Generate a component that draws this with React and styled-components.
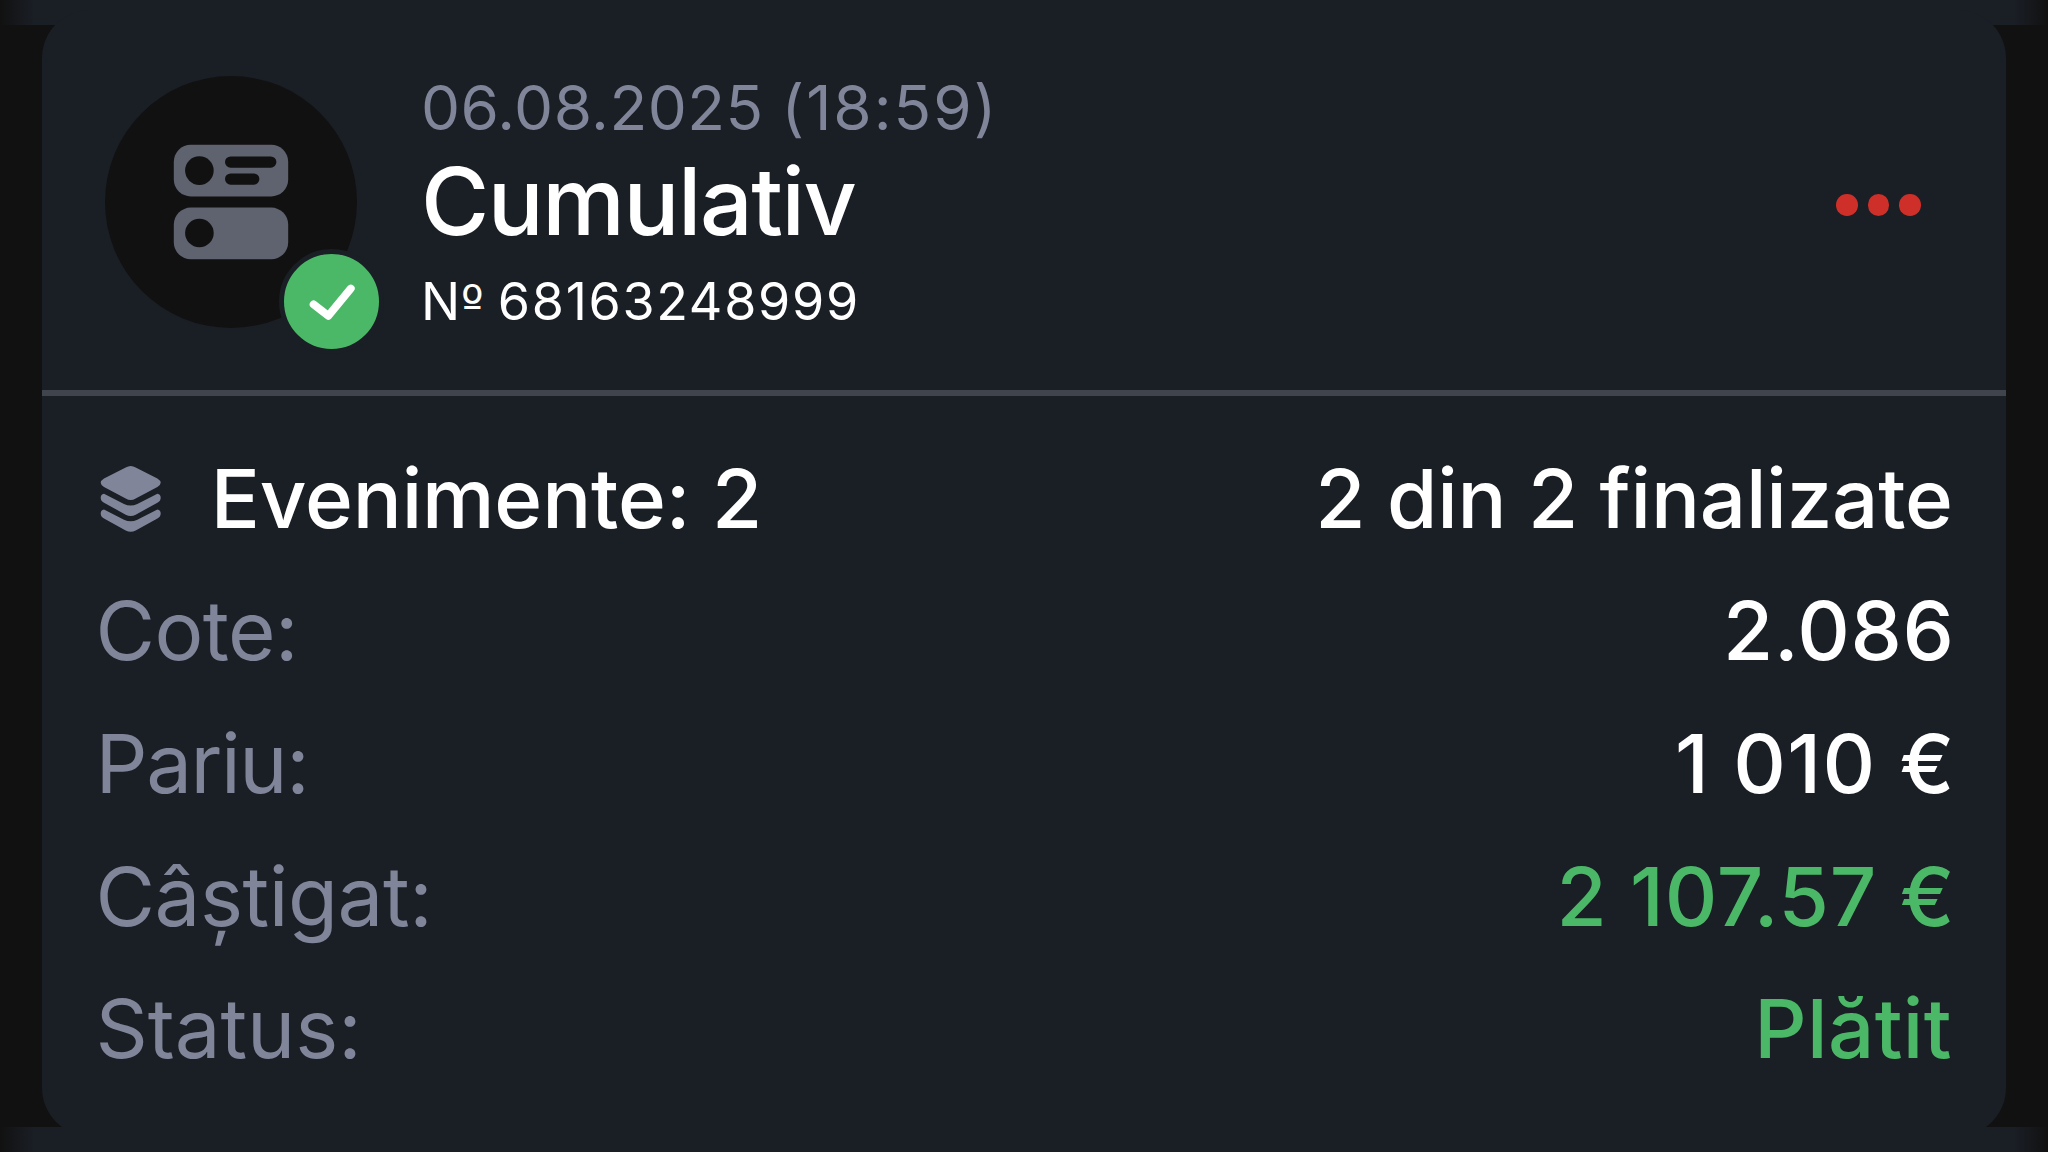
import React from 'react';
import styled, { createGlobalStyle } from 'styled-components';

const color = {
  page: '#111111',
  card: '#1a1e25',
  muted: '#808599',
  text: '#ffffff',
  green: '#4bb868',
  red: '#ce2f28',
  line: '#40444d',
  glyph: '#5f626f',
};

const GlobalStyle = createGlobalStyle`
  *, *::before, *::after { box-sizing: border-box; }
  body {
    margin: 0;
    background: ${color.page};
    font-family: Inter, 'Liberation Sans', sans-serif;
    overflow: hidden;
  }
`;

const Page = styled.div`
  display: flex;
  flex-direction: column;
  height: 1152px;
  background: ${color.page};
`;

const Strip = styled.div`
  flex: none;
  height: 25px;
  background: linear-gradient(
    90deg,
    ${color.page} 0,
    ${color.card} 34px,
    ${color.card} calc(100% - 34px),
    ${color.page} 100%
  );
`;

const Card = styled.article`
  flex: 1;
  display: flex;
  flex-direction: column;
  margin: -15px 42px -9px;
  border-radius: 48px;
  background: ${color.card};
`;

const Header = styled.header`
  display: flex;
  align-items: flex-start;
  height: 380px;
  padding: 62px 85.5px 0 63px;
`;

const Avatar = styled.div`
  position: relative;
  display: flex;
  align-items: center;
  justify-content: center;
  width: 252px;
  height: 252px;
  margin-top: 3.5px;
  border-radius: 50%;
  background: ${color.page};
`;

const StatusBadge = styled.div`
  position: absolute;
  right: -26.5px;
  bottom: -26px;
  display: flex;
  width: 105px;
  height: 105px;
  border: 5px solid ${color.card};
  border-radius: 50%;
  background: ${color.green};
`;

const TitleBlock = styled.div`
  flex: 1;
  display: flex;
  flex-direction: column;
  margin-left: 64px;
`;

const BetDate = styled.time`
  color: ${color.muted};
  font-size: 62px;
  line-height: 72px;
  letter-spacing: 0.45px;
`;

const BetHour = styled.span`
  letter-spacing: 2px;
`;

const BetType = styled.h1`
  margin: 9px 0 23px;
  color: ${color.text};
  font-size: 93px;
  font-weight: 500;
  line-height: 96px;
  letter-spacing: -1.44px;
`;

const BetNumber = styled.span`
  color: ${color.text};
  font-size: 52px;
  line-height: 60px;
  letter-spacing: 1.7px;
`;

const Ordinal = styled.span`
  margin: 0 -2px 0 -1px;
  font-family: 'DejaVu Sans', sans-serif;
  font-size: 48px;
  line-height: 1px;
  letter-spacing: 0;
`;

const MenuButton = styled.button`
  display: flex;
  gap: 10px;
  margin-top: 122px;
  padding: 0;
  border: 0;
  background: none;
`;

const Dot = styled.span`
  width: 21.5px;
  height: 21.5px;
  border-radius: 50%;
  background: ${color.red};
`;

const Divider = styled.hr`
  width: 100%;
  height: 5.5px;
  margin: 0;
  border: 0;
  background: ${color.line};
`;

const Details = styled.dl`
  display: flex;
  flex-direction: column;
  margin: 0;
  padding: 37.4px 53px 0 53.5px;
`;

const Row = styled.div`
  display: flex;
  align-items: center;
  justify-content: space-between;
  height: 132.6px;
  font-size: 81.6px;
  line-height: 132.6px;
  white-space: pre;
`;

const Label = styled.dt`
  color: ${(p) => (p.$strong ? color.text : color.muted)};
  font-weight: ${(p) => (p.$strong ? 500 : 400)};
  letter-spacing: ${(p) => p.$tracking}px;
`;

const Value = styled.dd`
  margin: 0 ${(p) => p.$trim}px 0 0;
  color: ${(p) => (p.$positive ? color.green : color.text)};
  font-weight: 500;
  letter-spacing: ${(p) => p.$tracking}px;
`;

const AccumulatorIcon = () => (
  <svg width="116" height="116" viewBox="0 0 116 116">
    <g fill={color.glyph}>
      <rect x="0.8" y="0.8" width="114.4" height="51.6" rx="17" />
      <rect x="0.8" y="63.6" width="114.4" height="51.6" rx="17" />
    </g>
    <g fill={color.page}>
      <circle cx="26.4" cy="26.6" r="14.3" />
      <rect x="52" y="12.4" width="51.4" height="11.3" rx="5.65" />
      <rect x="52" y="29.4" width="34.4" height="11.3" rx="5.65" />
      <circle cx="26.4" cy="89" r="14.3" />
    </g>
  </svg>
);

const CheckIcon = () => (
  <svg width="95" height="95" viewBox="0 0 95 95">
    <path
      d="M29.6 50.4 44.4 61.8 66.8 34.6"
      fill="none"
      stroke={color.text}
      strokeWidth="7.8"
      strokeLinecap="round"
      strokeLinejoin="round"
    />
  </svg>
);

const chevron =
  'M5 29.7 25 39.9Q31.7 42.9 38.3 39.9L58.4 29.7Q61.7 30.3 61.7 33.7 61.7 37 58.4 38.7L36.7 50.7Q31.7 53.3 26.7 50.7L5 38.7Q1.7 37 1.7 33.7 1.7 30.3 5 29.7Z';

const LayersIcon = () => (
  <svg width="64" height="70" viewBox="0 0 64 70" fill={color.muted}>
    <path d="M26.7 3.6Q31.7 0.4 36.7 3.6L58.4 14.5Q65 18.7 58.4 23L36.7 34.4Q31.7 37.8 26.7 34.4L5 23Q-1.6 18.7 5 14.5Z" />
    <path d={chevron} />
    <path d={chevron} transform="translate(0 15.8)" />
  </svg>
);

const Events = styled.span`
  display: flex;
  align-items: center;
  gap: 48px;
  margin-left: 3.2px;
`;

const rows = [
  { label: 'Cote:', labelTracking: -0.6, value: '2.086', tracking: 0.67, trim: -1.6 },
  { label: 'Pariu:', labelTracking: -1.46, value: '1 010 €', tracking: 1.35, trim: -2.8 },
  { label: 'Câștigat:', labelTracking: -0.48, value: '2 107.57 €', tracking: 0.8, trim: -2.3, positive: true },
  { label: 'Status:', labelTracking: -0.1, value: 'Plătit', tracking: 0.4, trim: 1, positive: true },
];

export default function App() {
  return (
    <>
      <GlobalStyle />
      <Page>
        <Strip />
        <Card>
          <Header>
            <Avatar>
              <AccumulatorIcon />
              <StatusBadge>
                <CheckIcon />
              </StatusBadge>
            </Avatar>
            <TitleBlock>
              <BetDate>
                06.08.2025 <BetHour>(18:59)</BetHour>
              </BetDate>
              <BetType>Cumulativ</BetType>
              <BetNumber>
                N<Ordinal>º</Ordinal> 68163248999
              </BetNumber>
            </TitleBlock>
            <MenuButton aria-label="Meniu">
              <Dot />
              <Dot />
              <Dot />
            </MenuButton>
          </Header>
          <Divider />
          <Details>
            <Row>
              <Label $strong $tracking={-0.15}>
                <Events>
                  <LayersIcon />
                  Evenimente: 2
                </Events>
              </Label>
              <Value $tracking={-0.2} $trim={0.3}>2 din 2 finalizate</Value>
            </Row>
            {rows.map((r) => (
              <Row key={r.label}>
                <Label $tracking={r.labelTracking}>{r.label}</Label>
                <Value $tracking={r.tracking} $trim={r.trim} $positive={r.positive}>
                  {r.value}
                </Value>
              </Row>
            ))}
          </Details>
        </Card>
        <Strip />
      </Page>
    </>
  );
}
